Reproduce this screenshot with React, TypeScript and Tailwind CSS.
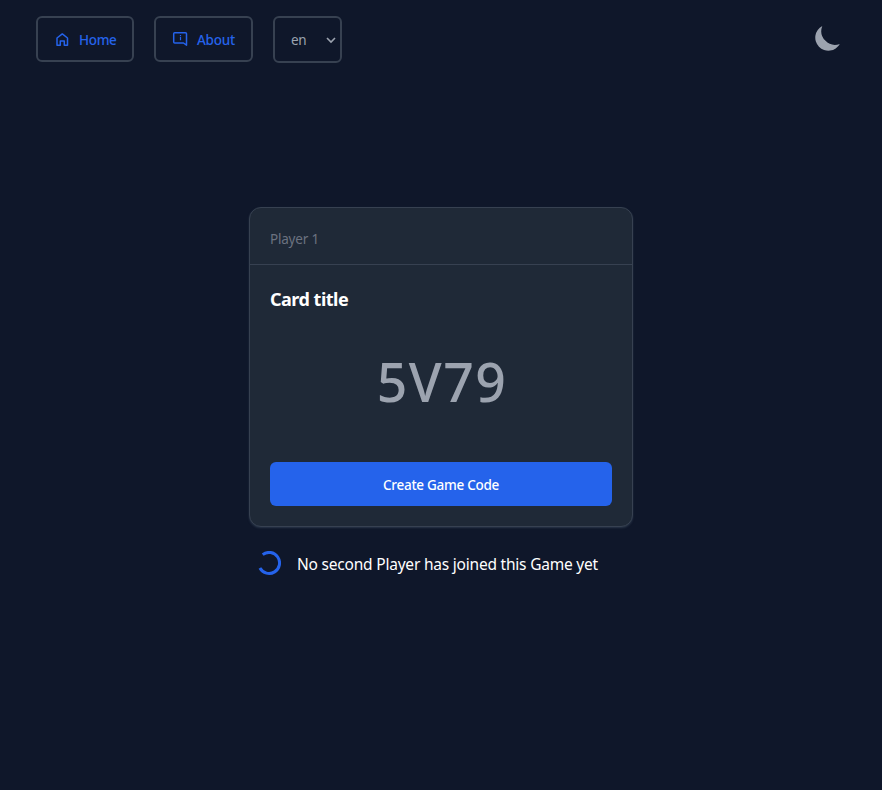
import React from 'react';

const font = "font-['Noto_Sans','Open_Sans',sans-serif]";

function HomeIcon() {
  return (
    <svg className="mr-2 mt-0.5 shrink-0" width="16" height="16" viewBox="0 0 16 16" fill="none" stroke="currentColor" strokeWidth="1.500" strokeLinejoin="round">
      <path d="M3 6 8.300 1.900l5.200 4.100v7.200h-3.200V9H6.300v4.200H3z" />
    </svg>
  );
}

function AboutIcon() {
  return (
    <svg className="mr-2 shrink-0" width="16" height="16" viewBox="0 0 16 16" fill="none" stroke="currentColor" strokeWidth="1.500" strokeLinejoin="round">
      <path d="M2.700 1.700H13.500q1 0 1 1V14.200L11.500 12H2.700q-1 0-1-1V2.700q0-1 1-1z" />
      <path d="M8.500 4v1.200M8.500 6v3.200" strokeWidth="1.200" />
    </svg>
  );
}

function Moon() {
  return (
    <svg className="mt-2 text-[#9ca3af]" width="28" height="28" viewBox="0 0 28 28" fill="currentColor">
      <path d="M8.300 2A13.100 13.100 0 1 0 25.800 20 13.800 13.800 0 0 1 8.300 2z" />
    </svg>
  );
}

function Spinner() {
  return (
    <svg className="-mt-[3px] shrink-0 text-[#2563eb]" width="24" height="24" viewBox="0 0 24 24" fill="none" stroke="currentColor" strokeWidth="3">
      <path d="M5.700 3.600A10.500 10.500 0 1 1 2.900 17.100" />
    </svg>
  );
}

export default function App() {
  return (
    <div className={`h-[790px] w-full overflow-hidden bg-[#0f172a] text-white ${font}`}>
      <header className="flex items-start justify-between pl-9 pr-10 pt-4">
        <nav className="flex h-[47px] items-start gap-5 text-[13.500px] tracking-[-0.250px]">
          <a className="flex h-[46px] w-[98px] items-center rounded-md border-2 border-[#374151] pl-4 font-medium tracking-[-0.350px] text-[#2563eb]"><HomeIcon /><span className="ml-px mt-0.5">Home</span></a>
          <a className="flex h-[46px] w-[99px] items-center rounded-md border-2 border-[#374151] pl-4 font-medium text-[#2563eb]"><AboutIcon /><span className="ml-px mt-0.5">About</span></a>
          <button className="flex h-[47px] w-[69px] items-center justify-between rounded-md border-2 border-[#374151] pl-4 pr-1 tracking-[-0.250px] text-[#9ca3af]">
            <span className="mt-0.5">en</span>
            <svg width="10" height="10" viewBox="0 0 10 10" fill="none" stroke="currentColor" strokeWidth="1.600"><path d="m1 3 4 4 4-4" /></svg>
          </button>
        </nav>
        <Moon />
      </header>
      <main className="mx-auto mt-36 w-96">
        <section className="h-80 rounded-xl border border-[#374151] bg-[#1f2937] shadow-[0_1px_2px_rgba(51,65,85,0.7)]">
          <div className="flex h-[57px] items-center border-b border-[#374151] px-5 pt-1.5 text-[13.500px] tracking-[-0.200px] text-[#6b7280]">Player 1</div>
          <div className="px-5 pt-5">
            <h3 className="text-lg font-bold leading-7 tracking-[-0.500px]">Card title</h3>
            <p className="mt-[41px] pl-0.5 text-center text-[53.500px] font-medium leading-[56px] tracking-[1.400px] text-[#9ca3af]">5V79</p>
            <button className="mt-[52px] flex h-11 w-full items-center justify-center rounded-md bg-[#2563eb] pt-0.5 text-[13.500px] font-medium tracking-[-0.280px]">Create Game Code</button>
          </div>
        </section>
        <div className="mt-[25px] flex items-center pl-2">
          <Spinner />
          <span className="ml-4 text-[15.500px] leading-6 tracking-[-0.210px]">No second Player has joined this Game yet</span>
        </div>
      </main>
    </div>
  );
}
